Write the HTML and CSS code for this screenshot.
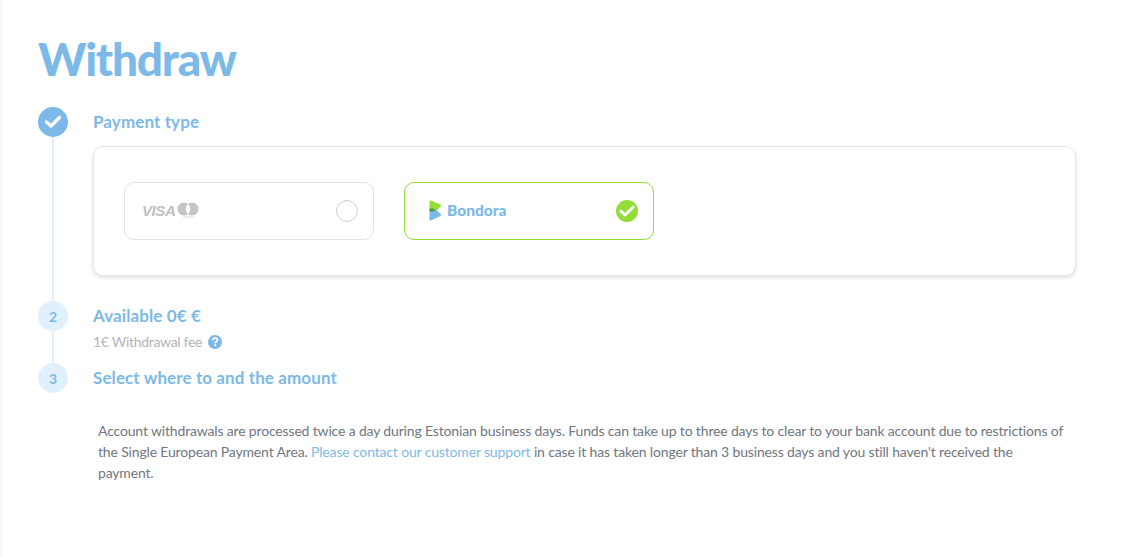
FILE: index.html
```html
<!DOCTYPE html>
<html lang="en">
<head>
<meta charset="utf-8">
<title>Withdraw</title>
<link rel="stylesheet" href="styles.css">
</head>
<body>
<main class="page">
  <h1 class="title">Withdraw</h1>
  <ol class="steps">
    <li class="step step-one">
      <div class="marker marker-done">
        <svg class="check" viewBox="0 0 30 30" width="30" height="30"><path d="M8.5 15 13 19 21.5 10.5" fill="none" stroke="#fff" stroke-width="3.4" stroke-linejoin="round" stroke-linecap="round"/></svg>
      </div>
      <div class="step-body">
        <h2 class="step-title">Payment type</h2>
        <div class="card">
          <div class="option">
            <div class="logo-visa">
              <span class="visa-word">VISA</span>
              <svg class="mc" viewBox="0 0 22 16" width="22" height="16">
                <circle cx="7" cy="7" r="6.5" fill="#c4c4c4"/><circle cx="15" cy="7" r="6.5" fill="#c4c4c4"/>
                <path d="M11 2a6.5 6.5 0 0 1 0 10a6.5 6.5 0 0 1 0-10z" fill="#fff"/>
                <rect x="6" y="14.5" width="12" height="1" fill="#dcdcdc"/>
              </svg>
            </div>
            <span class="radio"></span>
          </div>
          <div class="option option-active">
            <div class="logo-bondora">
              <svg viewBox="0 0 13 21" width="13" height="21">
                <path d="M0.5 11V1.5Q0.5 0 2 0.5L11.5 4.5Q13 5.5 11.5 6.5L7.5 10.5z" fill="#93dc3a"/>
                <path d="M0.5 10V19.5Q0.5 21 2 20.5L11.5 16Q13 15 11.5 14L7.5 10z" fill="#7db9e8"/>
                <path d="M0.5 8.5H4L6.5 10 4 11.5H0.5z" fill="#4f9a3f"/>
              </svg>
              <span class="bondora-word">Bondora</span>
            </div>
            <span class="tick">
              <svg viewBox="0 0 22 22" width="22" height="22"><path d="M5 11.2 9 15 17 7.2" fill="none" stroke="#fff" stroke-width="3" stroke-linejoin="round" stroke-linecap="round"/></svg>
            </span>
          </div>
        </div>
      </div>
    </li>
    <li class="step step-two">
      <div class="marker">2</div>
      <div class="step-body">
        <h2 class="step-title">Available 0€ €</h2>
        <p class="fee">1€ Withdrawal fee
          <svg class="help" viewBox="0 0 14 14" width="14" height="14"><circle cx="7" cy="7" r="7" fill="#7db9e8"/><path d="M4.7 5.4C4.8 3.9 5.8 3.2 7.1 3.2 8.5 3.2 9.5 4 9.5 5.1 9.5 6.6 7.2 6.6 7.2 8.2" fill="none" stroke="#fff" stroke-width="1.7"/><rect x="6.2" y="9.3" width="2" height="1.9" fill="#fff"/></svg>
        </p>
      </div>
    </li>
    <li class="step step-three">
      <div class="marker">3</div>
      <div class="step-body">
        <h2 class="step-title">Select where to and the amount</h2>
      </div>
    </li>
  </ol>
  <p class="note">Account withdrawals are processed twice a day during Estonian business days. Funds can take up to three days to clear to your bank account due to restrictions of the Single European Payment Area. <a class="link" href="#">Please contact our customer support</a> in case it has taken longer than 3 business days and you still haven't received the payment.</p>
</main>
</body>
</html>
```
FILE: styles.css
```css
* { box-sizing: border-box; }
html, body { margin: 0; height: 100%; }
body {
  background: #fff;
  font-family: "Lato", "Open Sans", sans-serif;
  color: #6f7780;
  overflow: hidden;
}
.page {
  height: 557px;
  padding: 31px 54px 0 36px;
  border-left: 2px solid #f8f8f8;
}
.title {
  margin: 0 0 20px;
  font-size: 46px;
  line-height: 56px;
  font-weight: 900;
  color: #7db9e8;
  letter-spacing: -1.25px;
}
.steps { list-style: none; margin: 0; padding: 0; }
.step { display: flex; gap: 25px; position: relative; }
.step-one { height: 194px; }
.step-two { height: 62px; }
.step-three { height: 30px; }
.step-one::after, .step-two::after {
  content: "";
  position: absolute;
  left: 14px;
  top: 30px;
  bottom: 0;
  width: 2px;
  background: #e0f0fd;
}
.marker {
  flex: none;
  width: 30px;
  height: 30px;
  border-radius: 50%;
  background: #e0f0fd;
  color: #7db9e8;
  font-weight: 700;
  font-size: 14px;
  display: flex;
  align-items: center;
  justify-content: center;
}
.marker-done { background: #7db9e8; }
.check { width: 30px; height: 30px; display: block; }
.step-body { flex: 1; min-width: 0; }
.step-title {
  margin: 0;
  font-size: 17px;
  line-height: 30px;
  font-weight: 700;
  color: #7db9e8;
  letter-spacing: .1px;
}
.card {
  margin-top: 9px;
  height: 130px;
  padding: 35px 30px;
  background: #fff;
  border: 1px solid #e6e6e6;
  border-radius: 10px;
  box-shadow: 0 2px 4px rgba(0, 0, 0, .12);
  display: flex;
  gap: 30px;
}
.option {
  width: 250px;
  height: 58px;
  border: 1px solid #e2e2e2;
  border-radius: 10px;
  padding: 0 15px 0 17px;
  display: flex;
  align-items: center;
  justify-content: space-between;
}
.option-active { border-color: #93dc3a; padding-left: 24px; }
.logo-visa { display: flex; align-items: center; gap: 2px; margin-top: -2px; }
.visa-word {
  font-family: "Liberation Sans", sans-serif;
  font-weight: 700;
  font-style: italic;
  font-size: 15px;
  letter-spacing: -.4px;
  color: #c0c0c0;
}
.mc { display: block; }
.radio {
  width: 22px;
  height: 22px;
  border-radius: 50%;
  border: 1px solid #cfcfcf;
}
.logo-bondora { display: flex; align-items: center; gap: 5px; margin-top: -2px; }
.bondora-word {
  font-family: "Lato", sans-serif;
  font-weight: 900;
  font-size: 15.5px;
  color: #7db9e8;
}
.tick {
  width: 22px;
  height: 22px;
  border-radius: 50%;
  background: #93dc3a;
  display: block;
}
.tick svg { display: block; }
.fee {
  margin: 1px 0 0;
  font-size: 14px;
  line-height: 20px;
  color: #b5b5b5;
  display: flex;
  align-items: center;
  gap: 6px;
  letter-spacing: -.3px;
}
.help { display: block; }
.note {
  margin: 27px 0 0 60px;
  width: 968px;
  font-size: 14px;
  line-height: 21px;
  color: #6f7780;
  letter-spacing: -.16px;
}
.link { color: #7db9e8; text-decoration: none; }
```
